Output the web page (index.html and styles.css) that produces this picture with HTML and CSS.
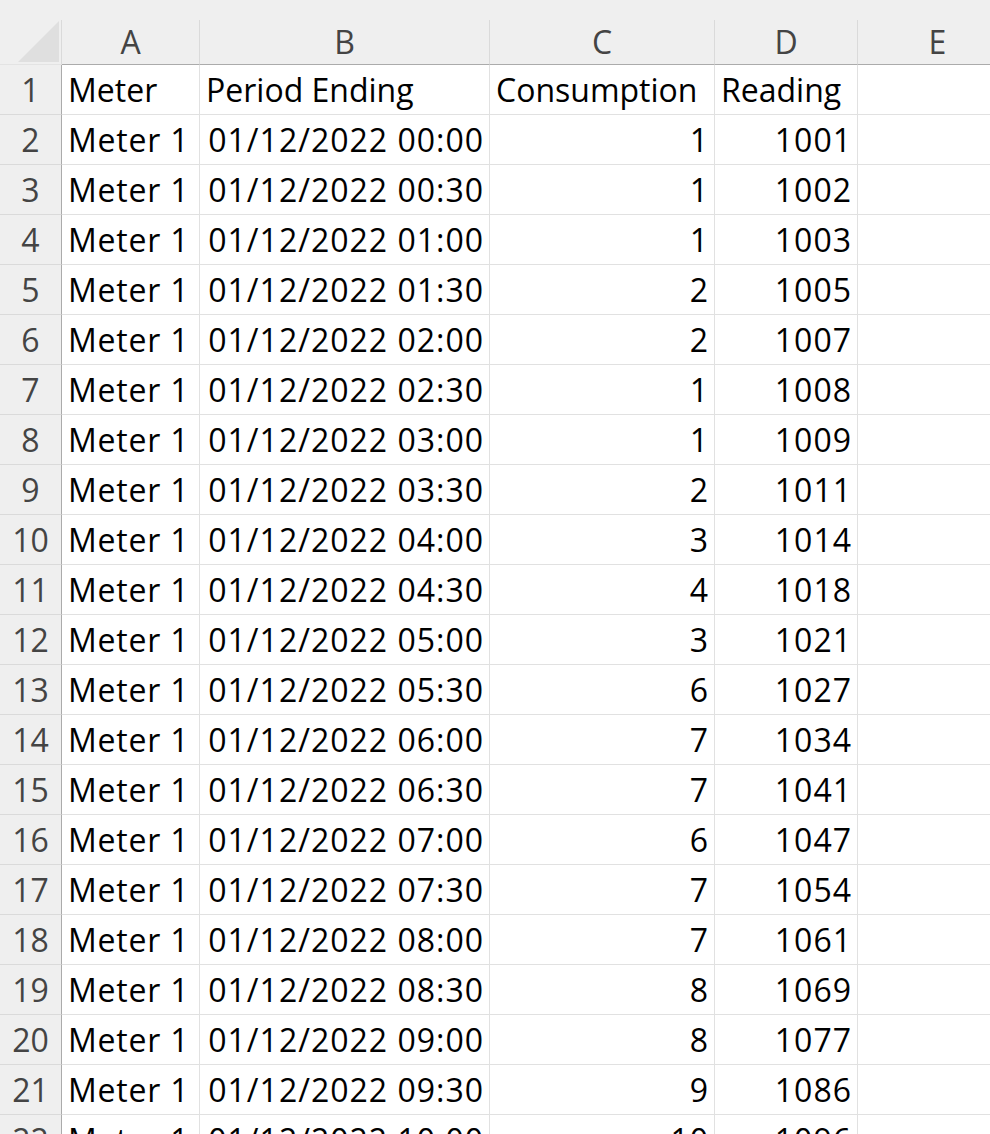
FILE: index.html
```html
<!DOCTYPE html>
<html>
<head>
<meta charset="utf-8">
<link rel="stylesheet" href="styles.css">
</head>
<body>
<div class="sheet">
  <div class="row head">
    <div class="corner"><div class="tri"></div></div>
    <div class="col">A</div><div class="col">B</div><div class="col">C</div><div class="col">D</div><div class="col">E</div>
  </div>
  <div class="row"><div class="num">1</div><div class="c">Meter</div><div class="c">Period Ending</div><div class="c">Consumption</div><div class="c">Reading</div><div class="c"></div></div>
  <div class="row"><div class="num">2</div><div class="c m">Meter 1</div><div class="c r">01/12/2022 00:00</div><div class="c r">1</div><div class="c r">1001</div><div class="c"></div></div>
  <div class="row"><div class="num">3</div><div class="c m">Meter 1</div><div class="c r">01/12/2022 00:30</div><div class="c r">1</div><div class="c r">1002</div><div class="c"></div></div>
  <div class="row"><div class="num">4</div><div class="c m">Meter 1</div><div class="c r">01/12/2022 01:00</div><div class="c r">1</div><div class="c r">1003</div><div class="c"></div></div>
  <div class="row"><div class="num">5</div><div class="c m">Meter 1</div><div class="c r">01/12/2022 01:30</div><div class="c r">2</div><div class="c r">1005</div><div class="c"></div></div>
  <div class="row"><div class="num">6</div><div class="c m">Meter 1</div><div class="c r">01/12/2022 02:00</div><div class="c r">2</div><div class="c r">1007</div><div class="c"></div></div>
  <div class="row"><div class="num">7</div><div class="c m">Meter 1</div><div class="c r">01/12/2022 02:30</div><div class="c r">1</div><div class="c r">1008</div><div class="c"></div></div>
  <div class="row"><div class="num">8</div><div class="c m">Meter 1</div><div class="c r">01/12/2022 03:00</div><div class="c r">1</div><div class="c r">1009</div><div class="c"></div></div>
  <div class="row"><div class="num">9</div><div class="c m">Meter 1</div><div class="c r">01/12/2022 03:30</div><div class="c r">2</div><div class="c r">1011</div><div class="c"></div></div>
  <div class="row"><div class="num">10</div><div class="c m">Meter 1</div><div class="c r">01/12/2022 04:00</div><div class="c r">3</div><div class="c r">1014</div><div class="c"></div></div>
  <div class="row"><div class="num">11</div><div class="c m">Meter 1</div><div class="c r">01/12/2022 04:30</div><div class="c r">4</div><div class="c r">1018</div><div class="c"></div></div>
  <div class="row"><div class="num">12</div><div class="c m">Meter 1</div><div class="c r">01/12/2022 05:00</div><div class="c r">3</div><div class="c r">1021</div><div class="c"></div></div>
  <div class="row"><div class="num">13</div><div class="c m">Meter 1</div><div class="c r">01/12/2022 05:30</div><div class="c r">6</div><div class="c r">1027</div><div class="c"></div></div>
  <div class="row"><div class="num">14</div><div class="c m">Meter 1</div><div class="c r">01/12/2022 06:00</div><div class="c r">7</div><div class="c r">1034</div><div class="c"></div></div>
  <div class="row"><div class="num">15</div><div class="c m">Meter 1</div><div class="c r">01/12/2022 06:30</div><div class="c r">7</div><div class="c r">1041</div><div class="c"></div></div>
  <div class="row"><div class="num">16</div><div class="c m">Meter 1</div><div class="c r">01/12/2022 07:00</div><div class="c r">6</div><div class="c r">1047</div><div class="c"></div></div>
  <div class="row"><div class="num">17</div><div class="c m">Meter 1</div><div class="c r">01/12/2022 07:30</div><div class="c r">7</div><div class="c r">1054</div><div class="c"></div></div>
  <div class="row"><div class="num">18</div><div class="c m">Meter 1</div><div class="c r">01/12/2022 08:00</div><div class="c r">7</div><div class="c r">1061</div><div class="c"></div></div>
  <div class="row"><div class="num">19</div><div class="c m">Meter 1</div><div class="c r">01/12/2022 08:30</div><div class="c r">8</div><div class="c r">1069</div><div class="c"></div></div>
  <div class="row"><div class="num">20</div><div class="c m">Meter 1</div><div class="c r">01/12/2022 09:00</div><div class="c r">8</div><div class="c r">1077</div><div class="c"></div></div>
  <div class="row"><div class="num">21</div><div class="c m">Meter 1</div><div class="c r">01/12/2022 09:30</div><div class="c r">9</div><div class="c r">1086</div><div class="c"></div></div>
  <div class="row"><div class="num">22</div><div class="c m">Meter 1</div><div class="c r">01/12/2022 10:00</div><div class="c r">10</div><div class="c r">1096</div><div class="c"></div></div>
</div>
</body>
</html>
```
FILE: styles.css
```css
html, body {
  margin: 0;
  padding: 0;
  background: #ffffff;
  overflow: hidden;
}
.sheet {
  width: 1018px;
  font-family: "Open Sans", "Liberation Sans", sans-serif;
  font-size: 32px;
  color: #000;
}
.row {
  display: grid;
  grid-template-columns: 62px 138px 290px 225px 143px 160px;
  height: 50px;
}
.row > div {
  box-sizing: border-box;
  border-right: 1px solid #e1e1e1;
  border-bottom: 1px solid #e1e1e1;
  line-height: 49px;
  white-space: nowrap;
  overflow: hidden;
}
.head {
  height: 65px;
  background: #efefef;
  padding-top: 20px;
  box-sizing: border-box;
}
.head > div {
  line-height: 44px;
  border-right: 1px solid #dadada;
  border-bottom: 1px solid #ababab;
}
.head > .corner {
  border-bottom: 1px solid #e3e3e3;
  display: flex;
  justify-content: flex-end;
  align-items: flex-end;
  padding: 0 2px 2px 0;
}
.tri {
  width: 41px;
  height: 41px;
  background: #dfdfdf;
  clip-path: polygon(100% 0, 100% 100%, 0 100%);
}
.col {
  text-align: center;
  color: #444;
}
.row > .num {
  background: #efefef;
  color: #444;
  text-align: center;
  border-right: 1px solid #ababab;
  border-bottom: 1px solid #dadada;
}
.c {
  padding: 0 6px;
}
.c.m {
  letter-spacing: 0.8px;
}
.c.r {
  text-align: right;
  letter-spacing: 1px;
  padding-right: 5px;
}
```
